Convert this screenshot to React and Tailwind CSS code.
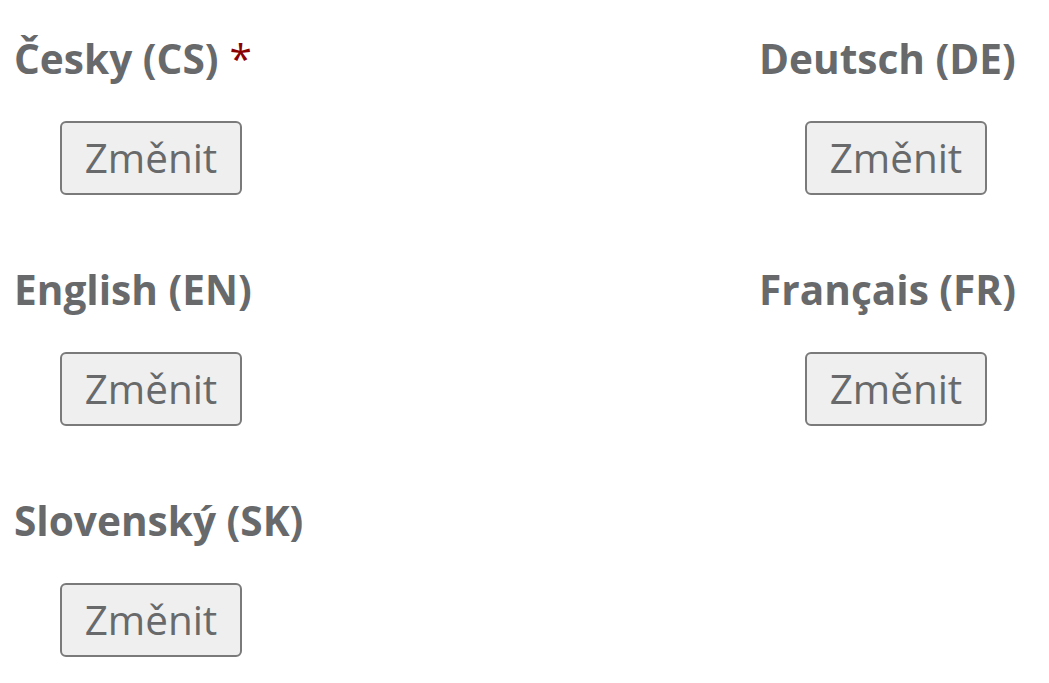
import React from "react";

const items = [
  { label: "Česky (CS)", required: true },
  { label: "Deutsch (DE)" },
  { label: "English (EN)" },
  { label: "Français (FR)" },
  { label: "Slovenský (SK)" },
];

function Field({ label, required }) {
  return (
    <div className="flex flex-col items-start">
      <div className="text-[40.6px] font-bold leading-[54px] text-[#67696b] whitespace-nowrap">
        {label}
        {required && <span className="ml-[11px] text-[#8b0000] font-normal">*</span>}
      </div>
      <button className="mt-[35px] ml-[46px] h-[74px] w-[182px] rounded-[6px] border-2 border-[#7a7a7a] bg-[#efefef] text-[40.4px] leading-[54px] text-[#67696b] font-normal flex items-center justify-center">
        Změnit
      </button>
    </div>
  );
}

export default function App() {
  return (
    <div
      className="min-h-[683px] w-[1049px] bg-white pt-[32px] pl-[14px]"
      style={{ fontFamily: '"Open Sans", "Noto Sans", sans-serif' }}
    >
      <div className="grid grid-cols-[745px_1fr] gap-y-[68px]">
        {items.map((it) => (
          <Field key={it.label} {...it} />
        ))}
      </div>
    </div>
  );
}
